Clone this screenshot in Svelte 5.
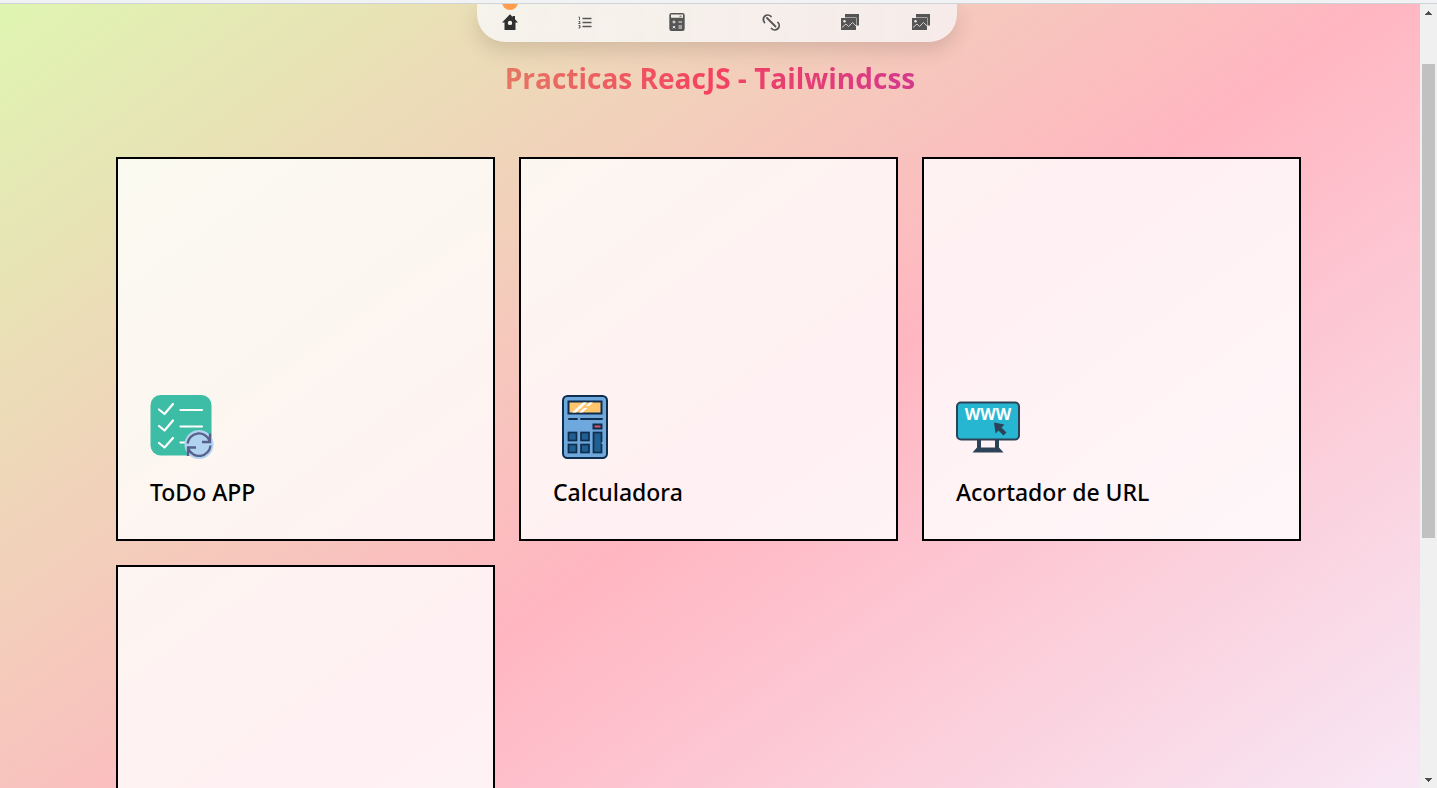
<script>
  const cards = [
    { title: 'ToDo APP', icon: 'todo' },
    { title: 'Calculadora', icon: 'calc' },
    { title: 'Acortador de URL', icon: 'url' },
    { title: '', icon: '' }
  ];
  const links = [
    { label: 'Inicio', icon: 'home' },
    { label: 'ToDo', icon: 'list' },
    { label: 'Calculadora', icon: 'calculator' },
    { label: 'Acortador', icon: 'link' },
    { label: 'Fotos', icon: 'images' },
    { label: 'Galeria', icon: 'images' }
  ];
</script>

<div class="window">
  <div class="edge"></div>
  <div class="view">
    <main>
      <h1><span>Practicas ReacJS - Tailwindcss</span></h1>
      <section class="cards">
        {#each cards as card}
          <article class="card">
            {#if card.icon === 'todo'}
              <svg viewBox="0 0 64 64" aria-hidden="true">
                <rect x="0.5" y="0" width="61" height="60.5" rx="10" fill="#3dbca6" />
                <g fill="none" stroke="#fff" stroke-width="2.2" stroke-linecap="round" stroke-linejoin="round">
                  <path d="M9 14.5l5.5 4.5L23 9M9 31l5.500 4.500L23 25.500M9 48l5.500 4.500L23 43M30.500 15h21.500M30.500 31.500h21.500M30.500 47.500h6" />
                </g>
                <circle cx="49" cy="49.500" r="14.500" fill="#b2d3f0" />
                <g fill="none" stroke="#56608a" stroke-width="2.300">
                  <path d="M37.500 48.500A11.500 11.500 0 0 1 59.500 45.500M60 38.500v8.500h-8M60.500 50.500A11.500 11.500 0 0 1 38.500 54M38 61v-8.500h8" />
                </g>
              </svg>
            {:else if card.icon === 'calc'}
              <svg viewBox="0 0 64 64" aria-hidden="true">
                <g stroke="#0f2d4d" stroke-width="2">
                  <rect x="10" y="1" width="44" height="62" rx="4.500" fill="#6ea8dc" />
                  <rect x="15.500" y="6.500" width="33" height="12" fill="#ffc66e" />
                  <path d="M16 24h8M28 24h21" stroke-linecap="round" />
                  <rect x="40.500" y="29.500" width="8" height="4" fill="#e05260" />
                  <g fill="#1f6090" stroke-width="1.700">
                    <rect x="15.500" y="37.500" width="8" height="8" />
                    <rect x="28" y="37.500" width="8" height="8" />
                    <rect x="15.500" y="49.500" width="8" height="8" />
                    <rect x="28" y="49.500" width="8" height="8" />
                    <rect x="40.500" y="37.500" width="8" height="20" />
                  </g>
                </g>
                <path d="M19 17.500L30 7.500h4L23 17.500zM26 17.500l5-4.500h3.500l-5 4.500zM33 11l3.500-3.500H40L36 11z" fill="#fff" />
                <path d="M49.500 47v2" stroke="#6ea8dc" stroke-width="2" />
              </svg>
            {:else if card.icon === 'url'}
              <svg viewBox="0 0 64 64" aria-hidden="true">
                <rect x="1" y="7.500" width="62" height="37" rx="4" fill="#27b6d2" stroke="#2d4256" stroke-width="2" />
                <path d="M21 45h4v7.500h14V45h4v7.500l4.500 5h-31l4.500-5z" fill="#2d4256" />
                <text x="32" y="25" text-anchor="middle" fill="#fff">WWW</text>
                <path d="M38 27.500l10.500 2-3 3 5 5-3 3-5-5-3 3z" fill="#2d4256" />
              </svg>
            {/if}
            {#if card.title}<h2>{card.title}</h2>{/if}
          </article>
        {/each}
      </section>
    </main>
    <div class="scrollbar" aria-hidden="true">
      <svg viewBox="0 0 17 17"><path d="M5 11h7v-1h-1V9h-1V8H9V7H8v1H7v1H6v1H5z" fill="#505050" /></svg>
      <div class="track"><div class="thumb"></div></div>
      <svg viewBox="0 0 17 17"><path d="M5 7h7v1h-1v1h-1v1H9v1H8v-1H7V9H6V8H5z" fill="#505050" /></svg>
    </div>
    <nav>
      {#each links as link, i}
        <a href="#{link.icon}" aria-label={link.label} class:active={i === 0}>
          <svg viewBox="0 0 20 20" aria-hidden="true">
            {#if link.icon === 'home'}
              <path fill="currentColor" fill-rule="evenodd" d="M10 2.300l2.700 2.700V4H15v3.300l3 3.200h-2.500V18h-11v-7.500H2zM10 8.700a2.200 2.200 0 1 0 0 4.400a2.200 2.200 0 0 0 0-4.400z" />
            {:else if link.icon === 'list'}
              <path d="M7.500 6.500h9M7.500 10.500h9M7.500 14.500h9" stroke="currentColor" stroke-width="1.500" fill="none" />
              <path d="M3.500 5h1v3M3.500 9.500h1.500v1l-1.500 1h2M3.500 13.500H5v2.500H3.500M4 14.800h1" stroke="currentColor" stroke-width=".9" fill="none" />
            {:else if link.icon === 'calculator'}
              <path fill="currentColor" fill-rule="evenodd" d="M4.500 1h11A2.200 2.200 0 0 1 17.700 3.200v13.600A2.200 2.200 0 0 1 15.500 19h-11a2.200 2.200 0 0 1-2.200-2.200V3.200A2.200 2.200 0 0 1 4.500 1zM4 2.500v3.300h12V2.500z" />
              <path d="M5.500 10h3M7 8.500v3M11.500 10h3.500M5.800 14l2.400 2.400M8.200 14l-2.400 2.400M11.500 14h3.500M11.500 16h3.500" stroke="#f5f0ed" stroke-width="1" />
              <path d="M12.500 4.200h2" stroke="currentColor" stroke-width="1" />
            {:else if link.icon === 'link'}
              <path d="M3.500 10.500A4.300 4.300 0 1 1 10 4.500M6 6l8.500 8.500M10.500 16.500A4.300 4.300 0 1 0 17 10.500" stroke="currentColor" stroke-width="1.800" stroke-linecap="round" fill="none" />
            {:else}
              <path fill="currentColor" d="M5 2h14v11.500h-2.500V5.500H5zM1 6h15v12H1z" />
              <path d="M2 15.500l4-3.500 2.500 2.500 4-4 3.500 3.500" stroke="#f4eeec" stroke-width=".8" fill="none" />
              <circle cx="4.500" cy="9.200" r="1.200" fill="#f4eeec" />
            {/if}
          </svg>
        </a>
      {/each}
    </nav>
  </div>
</div>

<style>
  :global(body) {
    margin: 0;
    font-family: 'Noto Sans', 'Open Sans', sans-serif;
  }
  .window {
    display: flex;
    flex-direction: column;
    height: 100vh;
    overflow: hidden;
  }
  .edge {
    box-sizing: border-box;
    flex: none;
    height: 4px;
    background: #f1f2f4;
    border-bottom: 1px solid #d0d3d8;
  }
  .view {
    position: relative;
    flex: 1;
    min-height: 0;
    display: flex;
    overflow: hidden;
  }
  main {
    flex: 1;
    overflow: hidden;
    background: linear-gradient(144deg, #dff5b1 0%, #ffb6c1 55%, #f8e7f5 100%);
  }
  h1 {
    margin: 0;
    padding: 54px 0 59px;
    text-align: center;
    font-family: 'Open Sans', sans-serif;
    font-size: 28px;
    line-height: 40px;
    font-weight: 700;
  }
  h1 span {
    background: linear-gradient(to right, #e57763, #f5425f 50%, #d43a8c);
    background-clip: text;
    -webkit-background-clip: text;
    color: transparent;
  }
  .cards {
    display: grid;
    grid-template-columns: repeat(3, 1fr);
    gap: 24px;
    padding: 0 119px 0 116px;
  }
  .card {
    box-sizing: border-box;
    height: 384px;
    padding: 32px;
    border: 2px solid #000;
    background: rgba(255, 255, 255, 0.8);
    display: flex;
    flex-direction: column;
    justify-content: flex-end;
    gap: 18px;
  }
  .card svg {
    width: 64px;
    height: 64px;
  }
  .card text {
    font: 700 16px 'Open Sans', sans-serif;
  }
  h2 {
    margin: 0;
    font-size: 23px;
    line-height: 30px;
    font-weight: 500;
  }
  .scrollbar {
    flex: none;
    width: 17px;
    display: flex;
    flex-direction: column;
    background: #f0f0f0;
  }
  .scrollbar svg {
    width: 17px;
    height: 17px;
  }
  .track {
    flex: 1;
    padding: 43px 2px 0;
  }
  .thumb {
    height: 67%;
    background: #c1c1c1;
  }
  nav {
    position: absolute;
    top: 0;
    left: calc(50% - 2px);
    transform: translateX(-50%);
    box-sizing: border-box;
    display: grid;
    grid-template-columns: 66px 84px 100px 88px 70px 72px;
    height: 38px;
    padding-bottom: 2px;
    border-radius: 0 0 28px 28px;
    background: linear-gradient(to right, rgba(248, 248, 248, 0.8), rgba(246, 246, 248, 0.76));
    backdrop-filter: blur(8px);
    box-shadow: 0 8px 20px rgba(60, 40, 40, 0.16);
  }
  nav a {
    position: relative;
    display: flex;
    justify-content: center;
    align-items: center;
    color: #555;
  }
  nav a.active {
    color: #303030;
  }
  nav a.active::before {
    content: '';
    position: absolute;
    top: -10px;
    left: 50%;
    width: 16px;
    height: 16px;
    transform: translateX(-50%);
    border-radius: 50%;
    background: #ff9d4d;
  }
  nav svg {
    width: 20px;
    height: 20px;
  }
</style>
